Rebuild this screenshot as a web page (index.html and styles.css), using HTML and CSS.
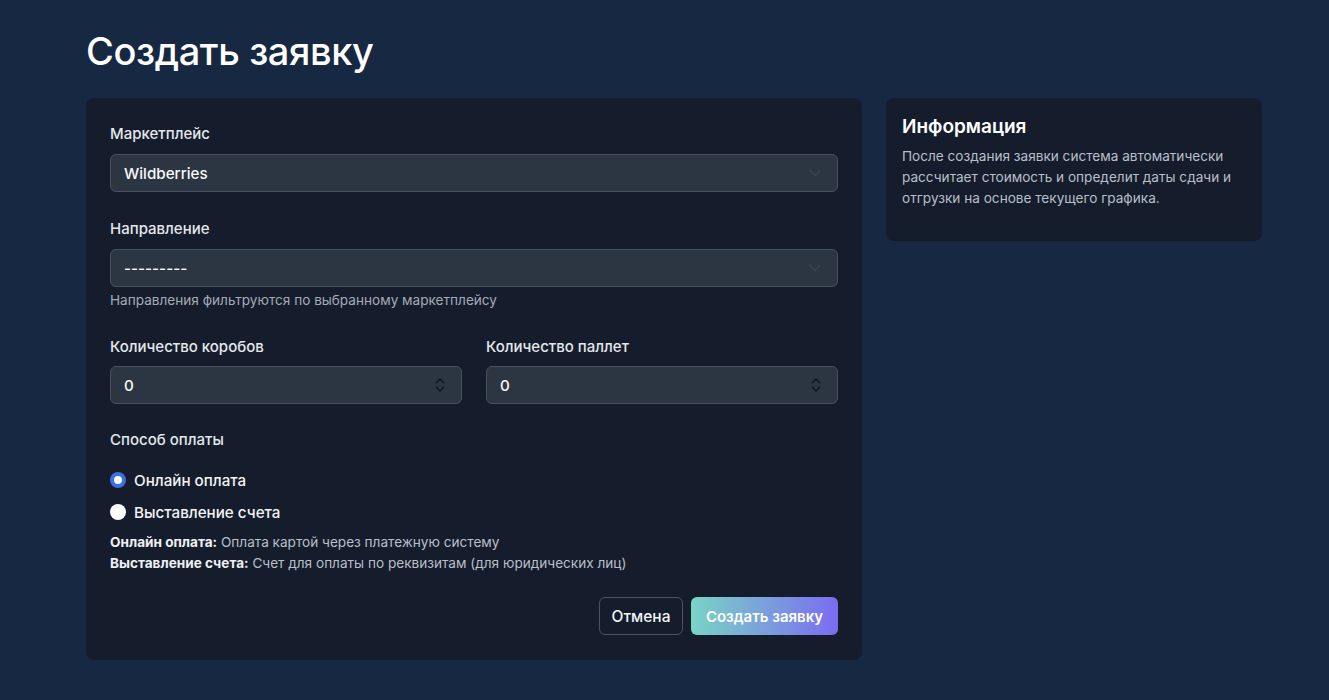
FILE: index.html
```html
<!DOCTYPE html>
<html lang="ru">
<head>
  <meta charset="UTF-8" />
  <meta name="viewport" content="width=device-width, initial-scale=1.0"/>
  <title>Создать заявку</title>
  <link rel="stylesheet" href="styles.css">
</head>
<body>
  <div class="page">
    <h1>Создать заявку</h1>

    <div class="layout">
      <form class="card form-card">
        <div class="group">
          <label class="label">Маркетплейс</label>
          <div class="select">
            <span>Wildberries</span>
            <svg class="chev" width="12" height="8" viewBox="0 0 12 8"><path d="M1 1.5l5 5 5-5" fill="none" stroke="currentColor" stroke-width="1.4" stroke-linecap="round" stroke-linejoin="round"/></svg>
          </div>
        </div>

        <div class="group group-help">
          <label class="label">Направление</label>
          <div class="select">
            <span>---------</span>
            <svg class="chev" width="12" height="8" viewBox="0 0 12 8"><path d="M1 1.5l5 5 5-5" fill="none" stroke="currentColor" stroke-width="1.4" stroke-linecap="round" stroke-linejoin="round"/></svg>
          </div>
          <div class="help">Направления фильтруются по выбранному маркетплейсу</div>
        </div>

        <div class="group row">
          <div class="col">
            <label class="label">Количество коробов</label>
            <div class="select">
              <span>0</span>
              <svg class="spin" width="10" height="16" viewBox="0 0 10 16"><path d="M1.5 5.5L5 2l3.5 3.5M1.5 10.5L5 14l3.5-3.5" fill="none" stroke="currentColor" stroke-width="1.4" stroke-linecap="round" stroke-linejoin="round"/></svg>
            </div>
          </div>
          <div class="col">
            <label class="label">Количество паллет</label>
            <div class="select">
              <span>0</span>
              <svg class="spin" width="10" height="16" viewBox="0 0 10 16"><path d="M1.5 5.5L5 2l3.5 3.5M1.5 10.5L5 14l3.5-3.5" fill="none" stroke="currentColor" stroke-width="1.4" stroke-linecap="round" stroke-linejoin="round"/></svg>
            </div>
          </div>
        </div>

        <div class="payment">
          <label class="label">Способ оплаты</label>
          <div class="radio-row">
            <span class="radio checked"></span>
            <span>Онлайн оплата</span>
          </div>
          <div class="radio-row">
            <span class="radio"></span>
            <span>Выставление счета</span>
          </div>
          <div class="notes">
            <div><b>Онлайн оплата:</b> Оплата картой через платежную систему</div>
            <div><b>Выставление счета:</b> Счет для оплаты по реквизитам (для юридических лиц)</div>
          </div>
        </div>

        <div class="actions">
          <button type="button" class="btn btn-outline">Отмена</button>
          <button type="button" class="btn btn-primary">Создать заявку</button>
        </div>
      </form>

      <div class="card info-card">
        <h3>Информация</h3>
        <p>После создания заявки система автоматически рассчитает стоимость и определит даты сдачи и отгрузки на основе текущего графика.</p>
      </div>
    </div>
  </div>
</body>
</html>
```

FILE: styles.css
```css
body {
  font-family: Inter, "Noto Sans", sans-serif;
  margin: 0;
  background: #172842;
  color: #f3f4f6;
}

.page {
  width: 1176px;
  margin-left: 86px;
}

h1 {
  font-size: 38px;
  font-weight: 500;
  line-height: 48px;
  margin: 27px 0 23px;
  color: #ffffff;
  letter-spacing: -0.4px;
}

.layout {
  display: flex;
  gap: 24px;
  align-items: flex-start;
}

.card {
  background: #151d2c;
  border-radius: 8px;
}

.form-card {
  width: 776px;
  box-sizing: border-box;
  padding: 25px 24px 25px;
}

.info-card {
  width: 376px;
  box-sizing: border-box;
  padding: 16px 16px 20px;
  min-height: 143px;
}

.group {
  margin-bottom: 26px;
}

.group-help {
  margin-bottom: 27px;
}

.label {
  display: block;
  font-size: 15px;
  font-weight: 500;
  line-height: 22px;
  margin-bottom: 9px;
  color: #e5e7eb;
}

.row {
  display: flex;
  gap: 24px;
  margin-bottom: 25px;
}

.row .label {
  margin-bottom: 8px;
}

.col {
  flex: 1;
}

.select {
  height: 38px;
  box-sizing: border-box;
  background: #2c3542;
  border: 1px solid #485161;
  border-radius: 6px;
  display: flex;
  align-items: center;
  justify-content: space-between;
  padding: 0 16px 0 13px;
  font-size: 15.2px;
  font-weight: 500;
  color: #f9fafb;
}

.chev {
  color: #3c4554;
}

.spin {
  color: #0f141c;
}

.help {
  font-size: 13.6px;
  line-height: 18px;
  margin-top: 4px;
  color: #a3abb8;
}

.payment .label {
  margin-bottom: 17px;
}

.radio-row {
  display: flex;
  align-items: center;
  gap: 8px;
  height: 24px;
  font-size: 15.2px;
  font-weight: 500;
  margin-bottom: 8px;
}

.radio {
  width: 16px;
  height: 16px;
  border-radius: 50%;
  background: #ffffff;
  box-sizing: border-box;
}

.radio.checked {
  background: #ffffff;
  border: 4.5px solid #3e6ee6;
}

.notes {
  font-size: 13.6px;
  line-height: 21px;
  color: #b8bfca;
}

.notes b {
  font-weight: 700;
  color: #eef0f3;
}

.actions {
  display: flex;
  justify-content: flex-end;
  gap: 8px;
  margin-top: 23px;
}

.btn {
  height: 38px;
  border-radius: 6px;
  font-family: inherit;
  cursor: pointer;
  padding: 0;
  white-space: nowrap;
}

.btn-outline {
  background: transparent;
  border: 1px solid #4b5363;
  color: #f3f4f6;
  font-size: 15.5px;
  font-weight: 500;
  width: 84px;
}

.btn-primary {
  border: none;
  background: linear-gradient(90deg, #7ad4c6 0%, #7b6cf1 100%);
  color: #ffffff;
  font-size: 15px;
  font-weight: 600;
  width: 147px;
}

.info-card h3 {
  margin: 0 0 6px;
  font-size: 19px;
  font-weight: 600;
  line-height: 26px;
  color: #ffffff;
}

.info-card p {
  margin: 0;
  font-size: 13.6px;
  line-height: 21px;
  color: #b8bfca;
}
```
